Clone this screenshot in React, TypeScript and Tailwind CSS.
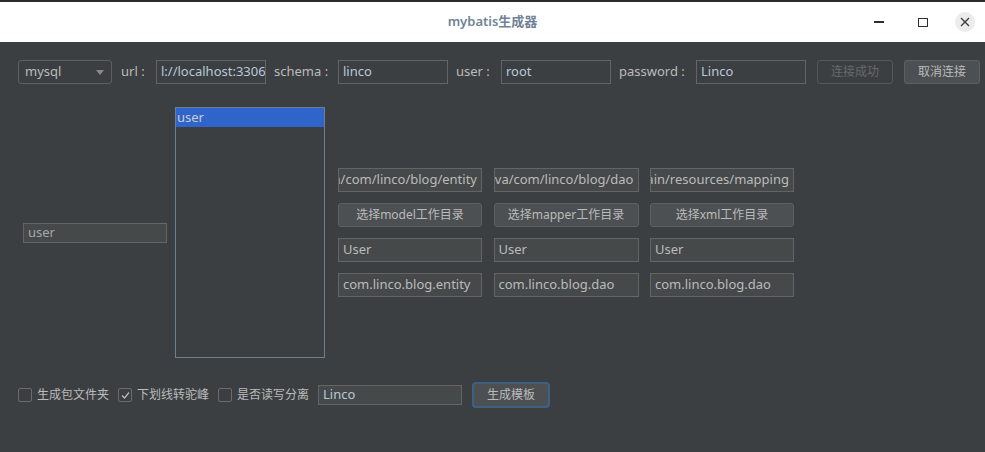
import React from "react";

const font = { fontFamily: '"Noto Sans", "Noto Sans CJK SC", sans-serif' };

function Field({ value, w, cls = "" }: { value: string; w: string; cls?: string }) {
  return (
    <div className={`${w} h-[24px] border border-[#646464] flex items-center px-[4px] overflow-hidden whitespace-nowrap text-[13px] ${cls}`}>
      {value}
    </div>
  );
}

function PathField({ value }: { value: string }) {
  return (
    <div className="w-full h-[24px] border border-[#646464] bg-[#45494a] flex items-center justify-end pr-[4px] pl-[2px] overflow-hidden whitespace-nowrap text-[13px] text-[#bbbbbb]">
      <span className="shrink-0">{value}</span>
    </div>
  );
}

function Btn({ label, cls = "" }: { label: string; cls?: string }) {
  return (
    <div className={`h-[24px] rounded-[3px] border border-[#5e6060] bg-[#4c5052] flex items-center justify-center text-[12px] text-[#bbbbbb] whitespace-nowrap ${cls}`}>
      {label}
    </div>
  );
}

function Check({ checked, label }: { checked?: boolean; label: string }) {
  return (
    <div className="flex items-center gap-[5px]">
      <div className="w-[14px] h-[14px] border border-[#6b6b6b] rounded-[2px] bg-[#3c3f41] flex items-center justify-center">
        {checked && (
          <svg width="11" height="11" viewBox="0 0 11 11">
            <path d="M2 5.5 L4.5 8 L9 2.5" fill="none" stroke="#bbbbbb" strokeWidth="1.2" />
          </svg>
        )}
      </div>
      <span className="text-[12px] text-[#bbbbbb] whitespace-nowrap">{label}</span>
    </div>
  );
}

export default function App() {
  return (
    <div className="w-[985px] h-[452px] bg-[#3c3f41] flex flex-col overflow-hidden" style={font}>
      <div className="h-[2px] bg-[#2b2b2b]" />
      <div className="h-[40px] bg-white relative flex items-center justify-center">
        <span className="text-[13px] font-semibold text-[#6f8296]">mybatis生成器</span>
        <div className="absolute right-0 top-0 h-full flex items-center">
          <div className="w-[44px] flex justify-center">
            <div className="w-[10px] h-[1.5px] bg-[#2e2e2e]" />
          </div>
          <div className="w-[44px] flex justify-center">
            <div className="w-[10px] h-[9px] border-[1.5px] border-[#2e2e2e]" />
          </div>
          <div className="w-[40px] flex justify-center">
            <div className="w-[20px] h-[20px] rounded-full bg-[#ececec] flex items-center justify-center">
              <svg width="10" height="10" viewBox="0 0 10 10">
                <path d="M1 1 L9 9 M9 1 L1 9" stroke="#3a3a3a" strokeWidth="1.3" />
              </svg>
            </div>
          </div>
        </div>
      </div>

      {/* top row */}
      <div className="flex items-center mt-[18px] pl-[18px] text-[13px]">
        <div className="w-[94px] h-[24px] rounded-[3px] border border-[#5e6060] flex items-center justify-between pl-[6px] pr-[7px] text-[#bbbbbb]">
          <span>mysql</span>
          <svg width="8" height="5" viewBox="0 0 8 5">
            <path d="M0 0 L8 0 L4 5 Z" fill="#8a8a8a" />
          </svg>
        </div>
        <span className="ml-[9px] w-[35px] text-[#bbbbbb]">url :</span>
        <Field value="l://localhost:3306" w="w-[110px]" cls="text-[#b8c8da]" />
        <span className="ml-[8px] w-[64px] text-[#bbbbbb]">schema :</span>
        <Field value="linco" w="w-[110px]" cls="text-[#b8c8da]" />
        <span className="ml-[8px] w-[45px] text-[#bbbbbb]">user :</span>
        <Field value="root" w="w-[110px]" cls="text-[#b8c8da]" />
        <span className="ml-[8px] w-[77px] text-[#bbbbbb]">password :</span>
        <Field value="Linco" w="w-[110px]" cls="text-[#b8c8da]" />
        <div className="ml-[11px] w-[76px] h-[24px] rounded-[3px] border border-[#555759] flex items-center justify-center text-[12px] text-[#676a6c]">连接成功</div>
        <Btn label="取消连接" cls="ml-[11px] w-[76px]" />
      </div>

      {/* middle */}
      <div className="flex items-center mt-[23px] pl-[23px]">
        <div className="w-[144px] h-[20px] border border-[#646464] bg-[#45494a] flex items-center px-[4px] text-[13px] text-[#a8a8a8]">user</div>
        <div className="ml-[8px] w-[150px] h-[251px] border border-[#6e7f91] flex flex-col">
          <div className="h-[19px] bg-[#2f65ca] flex items-center px-[1px] text-[13px] text-[#c8cbd0]">user</div>
        </div>
        <div className="ml-[13px] grid grid-cols-[144px_145px_144px] gap-x-[11.5px] gap-y-[11px]">
          <PathField value="src/main/java/com/linco/blog/entity" />
          <PathField value="src/main/java/com/linco/blog/dao" />
          <PathField value="src/main/resources/mapping" />
          <Btn label="选择model工作目录" />
          <Btn label="选择mapper工作目录" />
          <Btn label="选择xml工作目录" />
          <Field value="User" w="w-full" cls="bg-[#45494a] text-[#bbbbbb]" />
          <Field value="User" w="w-full" cls="bg-[#45494a] text-[#bbbbbb]" />
          <Field value="User" w="w-full" cls="bg-[#45494a] text-[#bbbbbb]" />
          <Field value="com.linco.blog.entity" w="w-full" cls="bg-[#45494a] text-[#bbbbbb]" />
          <Field value="com.linco.blog.dao" w="w-full" cls="bg-[#45494a] text-[#bbbbbb]" />
          <Field value="com.linco.blog.dao" w="w-full" cls="bg-[#45494a] text-[#bbbbbb]" />
        </div>
      </div>

      {/* bottom */}
      <div className="flex items-center mt-[24px] pl-[18px]">
        <Check label="生成包文件夹" />
        <div className="ml-[9px]"><Check checked label="下划线转驼峰" /></div>
        <div className="ml-[9px]"><Check label="是否读写分离" /></div>
        <div className="ml-[9px] w-[144px] h-[20px] border border-[#646464] bg-[#45494a] flex items-center px-[4px] text-[13px] text-[#b8c8da]">Linco</div>
        <div className="ml-[10px] w-[78px] h-[26px] rounded-[4px] border-2 border-[#3d6185] bg-[#4c5052] flex items-center justify-center text-[12px] text-[#bbbbbb]">生成模板</div>
      </div>
    </div>
  );
}
